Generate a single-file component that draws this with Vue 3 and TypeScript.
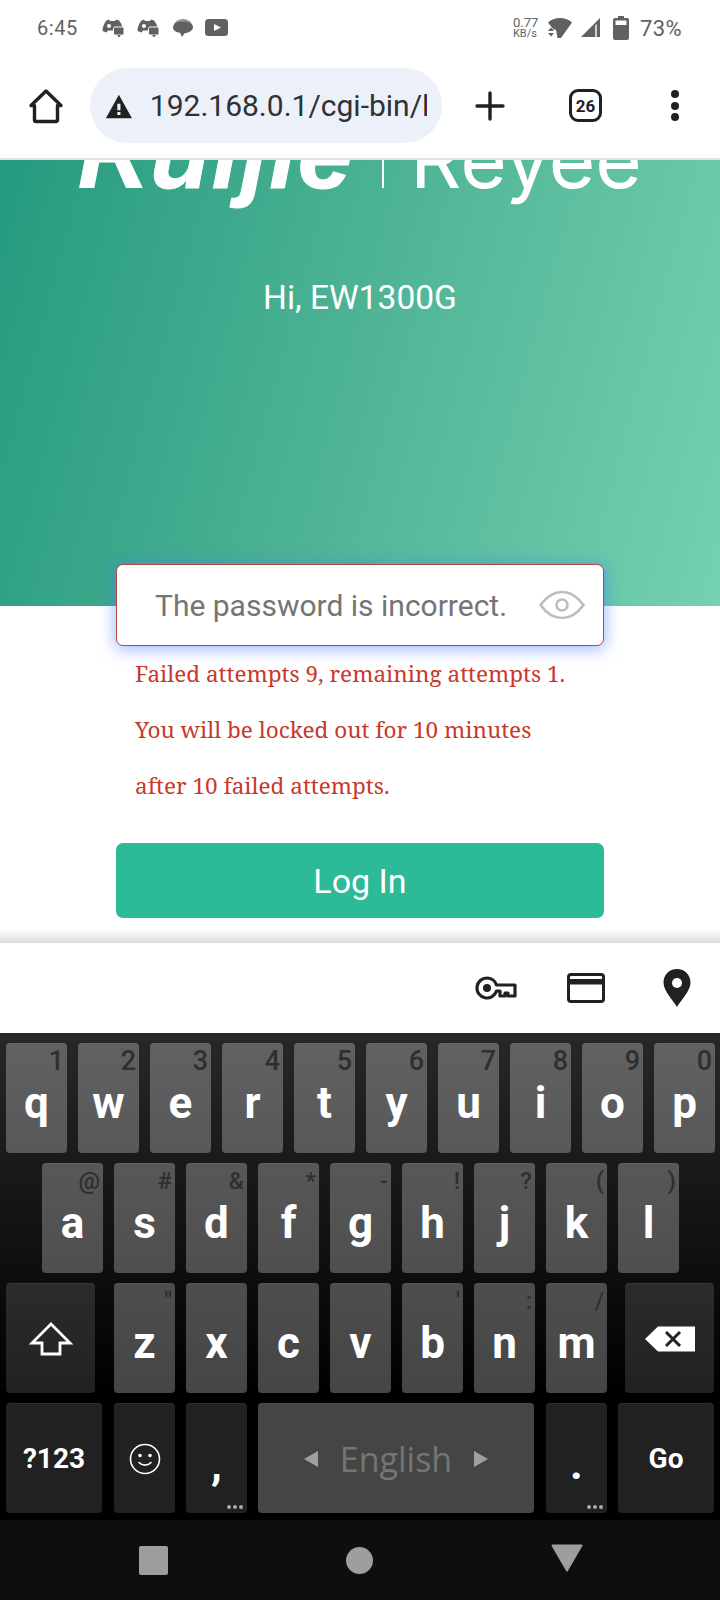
<script setup lang="ts">
interface Key {
  label: string;
  hint?: string;
}

const rowOne: Key[] = [
  { label: 'q', hint: '1' }, { label: 'w', hint: '2' }, { label: 'e', hint: '3' },
  { label: 'r', hint: '4' }, { label: 't', hint: '5' }, { label: 'y', hint: '6' },
  { label: 'u', hint: '7' }, { label: 'i', hint: '8' }, { label: 'o', hint: '9' },
  { label: 'p', hint: '0' },
];

const rowTwo: Key[] = [
  { label: 'a', hint: '@' }, { label: 's', hint: '#' }, { label: 'd', hint: '&' },
  { label: 'f', hint: '*' }, { label: 'g', hint: '-' }, { label: 'h', hint: '!' },
  { label: 'j', hint: '?' }, { label: 'k', hint: '(' }, { label: 'l', hint: ')' },
];

const rowThree: Key[] = [
  { label: 'z', hint: '"' }, { label: 'x' }, { label: 'c' }, { label: 'v' },
  { label: 'b', hint: "'" }, { label: 'n', hint: ':' }, { label: 'm', hint: '/' },
];
</script>

<template>
  <div class="phone">
    <header class="status-bar">
      <span class="clock">6:45</span>
      <div class="notif-icons">
        <svg v-for="n in 2" :key="n" width="22" height="20" viewBox="0 0 22 20">
          <path fill="#616161" d="M4.500 2.500L7 1.500 8 3h5l1-1.500 3 1C19.500 5.500 21 9 21 13l-4 1.500-1-2H6l-1.500 2L.5 13C.5 9 2 5.500 4.500 2.500Z" />
          <circle cx="7" cy="8" r="2" fill="#fff" />
          <rect x="11.500" y="9" width="10.500" height="8" rx="1.500" fill="#616161" stroke="#fff" stroke-width="1" />
          <path fill="#616161" d="M15 17h4l-2 2.500z" />
        </svg>
        <svg width="22" height="20" viewBox="0 0 22 20">
          <path fill="#9a9a9a" d="M2 7C3 3 7 1 11 1s8 2 9 5c-3-2-15-2-18 1Z" />
          <path fill="#616161" d="M1 9.500C1 5.500 5 3.500 11 3.500s10 2 10 5.500-4 6-8 6c-1 1-2 3-3.500 4 0-1.500-.5-3-1.500-4.200C4 14.300 1 12.500 1 9.500Z" />
        </svg>
        <svg class="yt" width="24" height="18" viewBox="0 0 24 18">
          <rect width="23" height="17" rx="3.500" fill="#616161" />
          <path fill="#fff" d="M9 5l7 3.500L9 12z" />
        </svg>
      </div>
      <div class="sys-icons">
        <div class="speed"><span>0.77</span><span class="unit">KB/s</span></div>
        <svg class="wifi" width="24" height="22" viewBox="0 0 24 22">
          <path fill="#616161" d="M0 5.500C3 2.500 7.500 1 12 1s9 1.500 12 4.500L13 21h-3.500L8 13 5 12z" />
          <path fill="#616161" d="M0 13h6l-3-3.500zM0 15h6l-3 3.500z" transform="translate(0 1)" />
        </svg>
        <svg class="signal" width="20" height="20" viewBox="0 0 20 20">
          <path fill="#616161" d="M0 19L19 0v19H16V6L14 8v11z" />
          <path fill="#d0d0d0" d="M14 8l2-2v13h-2z" />
        </svg>
        <svg class="battery" width="16" height="24" viewBox="0 0 16 24">
          <path fill="#616161" d="M5 0h6v2h3a2 2 0 0 1 2 2v18a2 2 0 0 1-2 2H2a2 2 0 0 1-2-2V4a2 2 0 0 1 2-2h3z" />
          <rect x="2.500" y="4.500" width="11" height="4.500" fill="#fff" />
        </svg>
        <span class="percent">73%</span>
      </div>
    </header>

    <nav class="toolbar">
      <svg class="home" width="36" height="36" viewBox="0 0 36 36">
        <path fill="none" stroke="#212121" stroke-width="3.400" stroke-linejoin="round" d="M18 3L3 17.500h3.500V32a1.500 1.500 0 0 0 1.500 1.500h20a1.500 1.500 0 0 0 1.500-1.500V17.500H33z" />
      </svg>
      <div class="url-pill">
        <svg class="warn" width="32" height="28" viewBox="0 0 32 28">
          <path fill="#212121" d="M1 28h30L16 1zM17.800 24.500h-3.600v-3.500h3.600zM17.800 19h-3.600v-7.500h3.600z" />
        </svg>
        <span class="url">192.168.0.1/cgi-bin/luci</span>
      </div>
      <svg class="plus" width="30" height="30" viewBox="0 0 30 30">
        <path stroke="#212121" stroke-width="3.400" stroke-linecap="round" d="M15 2v26M2 15h26" />
      </svg>
      <div class="tabs">26</div>
      <div class="menu"><i></i><i></i><i></i></div>
    </nav>

    <main class="page">
      <section class="hero">
        <div class="logo">
          <span class="logo-ruijie">Ruijie</span>
          <span class="logo-sep"></span>
          <span class="logo-reyee">Reyee</span>
        </div>
        <p class="hi">Hi, EW1300G</p>
      </section>

      <form class="login" @submit.prevent>
        <div class="pw-field">
          <span class="pw-placeholder">The password is incorrect.</span>
          <svg width="46" height="30" viewBox="0 0 46 30">
            <path fill="none" stroke="#bdbdbd" stroke-width="2.600" d="M1.500 15C8 6 15 2 23 2s15 4 21.500 13C38 24 31 28 23 28S8 24 1.500 15Z" />
            <circle cx="23" cy="15" r="5.500" fill="none" stroke="#bdbdbd" stroke-width="2.600" />
          </svg>
        </div>
        <div class="errors">
          <p>Failed attempts 9, remaining attempts 1.</p>
          <p>You will be locked out for 10 minutes</p>
          <p>after 10 failed attempts.</p>
        </div>
        <button class="login-btn" type="submit">Log In</button>
      </form>
    </main>

    <div class="accessory">
      <svg width="42" height="24" viewBox="0 0 42 24">
        <path fill="none" stroke="#212121" stroke-width="3.200" stroke-linejoin="round" d="M12 2a10 10 0 1 0 9.500 13H25v5h5v-3h3v3h7V9H21.500A10 10 0 0 0 12 2Z" />
        <circle cx="12" cy="12" r="4" fill="#212121" />
      </svg>
      <svg width="38" height="30" viewBox="0 0 38 30">
        <rect x="1.500" y="1.500" width="35" height="27" rx="2.500" fill="none" stroke="#212121" stroke-width="3" />
        <path fill="#212121" d="M2 6h34v5.500H2z" />
      </svg>
      <svg width="28" height="38" viewBox="0 0 28 38">
        <path fill="#212121" d="M14 0C6 0 .5 6 .5 13.500.5 22 10 31 14 38c4-7 13.500-16 13.500-24.500C27.500 6 22 0 14 0Z" />
        <circle cx="14" cy="14" r="5" fill="#fff" />
      </svg>
    </div>

    <div class="keyboard">
      <div class="row">
        <div v-for="k in rowOne" :key="k.label" class="key">
          <span class="hint">{{ k.hint }}</span>{{ k.label }}
        </div>
      </div>
      <div class="row row-two">
        <div v-for="k in rowTwo" :key="k.label" class="key">
          <span class="hint sym">{{ k.hint }}</span>{{ k.label }}
        </div>
      </div>
      <div class="row">
        <div class="key fn shift">
          <svg width="46" height="36" viewBox="0 0 46 36">
            <path fill="none" stroke="#fff" stroke-width="2.800" d="M23 3L4 22h10v11h18V22h10z" />
          </svg>
        </div>
        <div v-for="k in rowThree" :key="k.label" class="key">
          <span class="hint sym">{{ k.hint }}</span>{{ k.label }}
        </div>
        <div class="key fn del">
          <svg width="50" height="26" viewBox="0 0 50 26">
            <path fill="#fff" d="M0 13L13 .5h37v25H13z" />
            <path stroke="#222" stroke-width="3" d="M21 6l14 14M35 6L21 20" />
          </svg>
        </div>
      </div>
      <div class="row">
        <div class="key fn text wide first">?123</div>
        <div class="key fn">
          <svg width="32" height="32" viewBox="0 0 32 32">
            <circle cx="16" cy="16" r="14.500" fill="none" stroke="#fff" stroke-width="1.600" />
            <circle cx="11" cy="12.500" r="1.800" fill="#fff" />
            <circle cx="21" cy="12.500" r="1.800" fill="#fff" />
            <path fill="none" stroke="#fff" stroke-width="1.600" stroke-linecap="round" d="M10 19.500c3 3.500 9 3.500 12 0" />
          </svg>
        </div>
        <div class="key fn punct">,<span class="more"><i></i><i></i><i></i></span></div>
        <div class="key space">
          <svg width="14" height="16" viewBox="0 0 14 16"><path fill="#a0a0a0" d="M0 8l14-8v16z" /></svg>
          <span class="lang">English</span>
          <svg width="14" height="16" viewBox="0 0 14 16"><path fill="#a0a0a0" d="M14 8L0 0v16z" /></svg>
        </div>
        <div class="key fn punct">.<span class="more"><i></i><i></i><i></i></span></div>
        <div class="key fn text wide">Go</div>
      </div>
    </div>

    <footer class="nav-bar">
      <div class="nav-square"></div>
      <div class="nav-circle"></div>
      <svg width="32" height="28" viewBox="0 0 32 28">
        <path fill="#9e9e9e" stroke="#9e9e9e" stroke-width="2" stroke-linejoin="round" d="M1.500 1.500h29L16 26.500z" />
      </svg>
    </footer>
  </div>
</template>

<style>
html,
body {
  margin: 0;
  background: #fff;
}
</style>

<style scoped>
.phone {
  width: 720px;
  height: 1600px;
  overflow: hidden;
  display: flex;
  flex-direction: column;
  font-family: Roboto, sans-serif;
  background: #fff;
}

.status-bar {
  height: 56px;
  flex: none;
  display: flex;
  align-items: center;
  padding: 0 38px 0 37px;
  color: #616161;
}

.clock {
  font-size: 20px;
  letter-spacing: 0.6px;
}

.notif-icons {
  display: flex;
  align-items: center;
  gap: 13px;
  margin-left: 24px;
}

.yt {
  margin-left: -2px;
}

.sys-icons {
  margin-left: auto;
  display: flex;
  align-items: center;
}

.speed {
  display: flex;
  flex-direction: column;
  font-size: 13px;
  line-height: 12px;
  width: 35px;
}

.speed .unit {
  font-size: 11px;
  line-height: 10px;
}

.signal {
  margin-left: 9px;
}

.battery {
  margin-left: 12px;
}

.percent {
  margin-left: 11px;
  font-size: 22px;
  letter-spacing: 0.4px;
}

.toolbar {
  height: 104px;
  flex: none;
  display: flex;
  align-items: center;
  box-sizing: border-box;
  border-bottom: 2px solid #dfe1e5;
  padding: 0 0 3px 28px;
}

.url-pill {
  width: 352px;
  height: 75px;
  box-sizing: border-box;
  margin-left: 26px;
  padding: 0 15px 0 15px;
  border-radius: 38px;
  background: #ebf0f9;
  display: flex;
  align-items: center;
  overflow: hidden;
}

.url {
  margin-left: 17px;
  font-size: 30px;
  color: #303134;
  white-space: nowrap;
  overflow: hidden;
}

.plus {
  margin-left: 33px;
}

.tabs {
  margin-left: 64px;
  width: 33px;
  height: 33px;
  box-sizing: border-box;
  border: 3.500px solid #212121;
  border-radius: 9px;
  font-size: 17px;
  font-weight: 700;
  color: #212121;
  display: flex;
  align-items: center;
  justify-content: center;
}

.menu {
  margin-left: 69px;
  display: flex;
  flex-direction: column;
  gap: 3.500px;
}

.menu i {
  width: 8px;
  height: 8px;
  border-radius: 50%;
  background: #212121;
}

.page {
  height: 783px;
  flex: none;
  position: relative;
  background: #fff;
}

.page::after {
  content: '';
  position: absolute;
  left: 0;
  right: 0;
  bottom: 0;
  height: 14px;
  background: linear-gradient(to bottom, rgba(0, 0, 0, 0), rgba(0, 0, 0, 0.14));
}

.hero {
  height: 446px;
  overflow: hidden;
  display: flex;
  flex-direction: column;
  align-items: center;
  background: linear-gradient(105deg, #259a7f 0%, #4fb496 50%, #74d1b1 100%);
  color: #fff;
}

.logo {
  margin-top: -50px;
  height: 88px;
  display: flex;
  align-items: baseline;
  white-space: nowrap;
}

.logo-ruijie {
  font-family: 'Liberation Sans', sans-serif;
  font-weight: 700;
  font-style: italic;
  font-size: 98px;
  line-height: 88px;
  letter-spacing: 1.500px;
  -webkit-text-stroke: 1px #fff;
}

.logo-sep {
  width: 2px;
  height: 34px;
  background: #fff;
  margin: 0 26px 0 28px;
}

.logo-reyee {
  font-family: Inter, sans-serif;
  font-weight: 400;
  font-size: 80px;
  line-height: 88px;
}

.hi {
  margin: 80px 0 0;
  font-size: 33.500px;
  line-height: 40px;
}

.login {
  margin-top: -42px;
  padding: 0 116px;
  position: relative;
  display: flex;
  flex-direction: column;
}

.pw-field {
  height: 82px;
  box-sizing: border-box;
  border: 1px solid #b5483f;
  border-radius: 7px;
  background: #fff;
  box-shadow: 0 2px 16px 1px rgba(70, 120, 255, 0.55);
  display: flex;
  align-items: center;
  justify-content: space-between;
  padding: 0 18px 0 38px;
}

.pw-placeholder {
  font-size: 30px;
  color: #757575;
  white-space: nowrap;
}

.errors {
  padding-left: 19px;
  font-family: 'Noto Serif', 'DejaVu Serif', serif;
  font-size: 22.500px;
  line-height: 56px;
  color: #c8392b;
  white-space: nowrap;
}

.errors p {
  margin: 0;
}

.login-btn {
  margin-top: 29px;
  height: 75px;
  border: none;
  border-radius: 7px;
  background: #2dba98;
  color: #fff;
  font-family: Roboto, sans-serif;
  font-size: 34px;
}

.accessory {
  height: 90px;
  flex: none;
  box-sizing: border-box;
  display: flex;
  align-items: center;
  background: #fff;
  padding-left: 475px;
}

.accessory svg:nth-child(2) {
  margin-left: 50px;
}

.accessory svg:nth-child(3) {
  margin-left: 58px;
}

.keyboard {
  height: 487px;
  flex: none;
  box-sizing: border-box;
  padding: 10px 6px 0;
  display: flex;
  flex-direction: column;
  gap: 10px;
  background: linear-gradient(to bottom, #282828 0%, #000 75%);
}

.row {
  display: flex;
  gap: 11px;
}

.row-two {
  padding-left: 36px;
}

.key {
  position: relative;
  width: 61px;
  height: 110px;
  flex: none;
  box-sizing: border-box;
  padding-top: 8px;
  border-radius: 4px;
  border-top: 1px solid rgba(255, 255, 255, 0.06);
  background: rgba(255, 255, 255, 0.27);
  display: flex;
  align-items: center;
  justify-content: center;
  font-size: 44px;
  font-weight: 700;
  color: #fff;
}

.hint {
  position: absolute;
  top: 2px;
  right: 3px;
  font-size: 27px;
  line-height: 30px;
  font-weight: 500;
  color: #2f2f2f;
}

.hint.sym {
  font-size: 24px;
}

.key.fn {
  background: rgba(255, 255, 255, 0.13);
  padding-top: 0;
}

.key.shift {
  width: 89px;
  margin-right: 8px;
}

.key.del {
  width: 89px;
  margin-left: 7px;
}

.key.wide {
  width: 96px;
}

.key.first {
  margin-right: 1px;
}

.key.text {
  font-size: 28px;
}

.key.punct {
  padding-top: 10px;
  font-size: 44px;
}

.more {
  position: absolute;
  right: 4px;
  bottom: 4px;
  display: flex;
  gap: 2px;
}

.more i {
  width: 4px;
  height: 4px;
  border-radius: 50%;
  background: #aaa;
}

.key.space {
  width: 276px;
  margin-right: 1px;
  padding-top: 0;
  gap: 22px;
}

.lang {
  font-family: 'Open Sans', sans-serif;
  font-size: 34px;
  font-weight: 400;
  color: #757575;
}

.nav-bar {
  flex: 1;
  position: relative;
  background: #0e0e0e;
  display: flex;
  align-items: center;
  padding-left: 139px;
}

.nav-square {
  width: 29px;
  height: 29px;
  border-radius: 2px;
  background: #9e9e9e;
}

.nav-circle {
  margin-left: 178px;
  width: 27px;
  height: 27px;
  border-radius: 50%;
  background: #9e9e9e;
}

.nav-bar svg {
  margin-left: 178px;
  margin-bottom: 5px;
}
</style>
